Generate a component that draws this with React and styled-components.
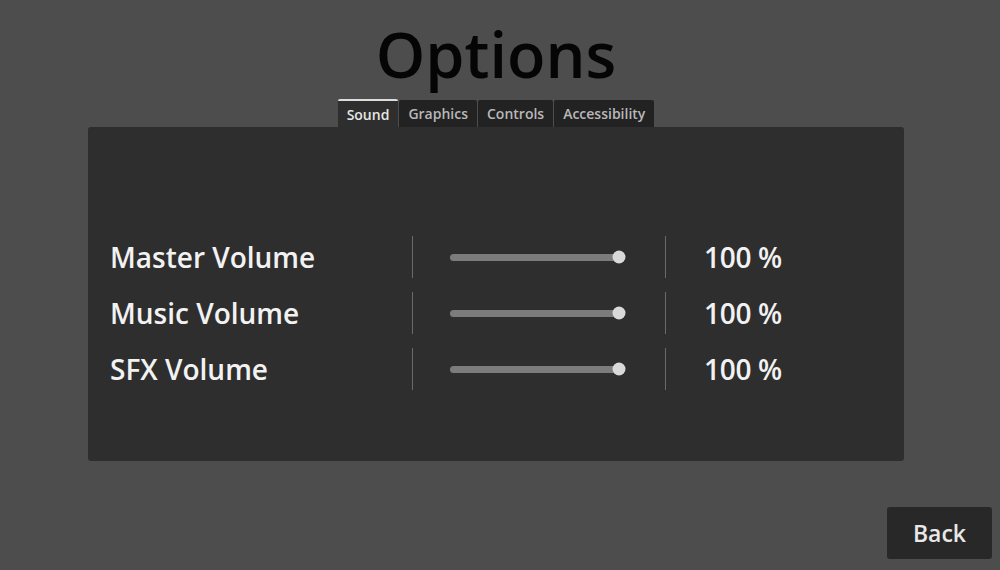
import React from "react";
import styled, { createGlobalStyle } from "styled-components";

const Global = createGlobalStyle`
  html, body { margin: 0; padding: 0; background: #4d4d4d; }
  body { font-family: "Open Sans", "Noto Sans", sans-serif; font-weight: 600; }
  * { box-sizing: border-box; }
`;

const Page = styled.div`
  width: 992px;
  height: 570px;
  display: flex;
  flex-direction: column;
  align-items: center;
`;

const Title = styled.h1`
  margin: 9px 0 0;
  height: 90px;
  font-size: 63px;
  line-height: 90px;
  font-weight: 600;
  color: #050505;
`;

const TabBar = styled.div`
  display: flex;
  align-items: flex-end;
  gap: 1px;
  height: 28px;
`;

const Tab = styled.div`
  height: ${(p) => (p.$active ? "28px" : "27px")};
  padding: 0 9px;
  display: flex;
  align-items: center;
  font-size: 14px;
  color: ${(p) => (p.$active ? "#e6e6e6" : "#b8b8b8")};
  background: ${(p) => (p.$active ? "#2e2e2e" : "#222222")};
  border-top: ${(p) => (p.$active ? "2px solid #dcdcdc" : "none")};
  border-radius: 2px 2px 0 0;
`;

const Panel = styled.div`
  width: 816px;
  height: 334px;
  background: #2e2e2e;
  border-radius: 3px;
  padding: 109px 0 0 22px;
  display: flex;
  flex-direction: column;
  gap: 14px;
`;

const Row = styled.div`
  display: flex;
  align-items: center;
  height: 42px;
`;

const Label = styled.div`
  width: 302px;
  font-size: 28px;
  color: #f2f2f2;
`;

const Divider = styled.div`
  width: 1px;
  align-self: stretch;
  background: #6a6a6a;
`;

const SliderCell = styled.div`
  width: 252px;
  padding-left: 37px;
  display: flex;
  align-items: center;
`;

const Track = styled.div`
  position: relative;
  width: 175px;
  height: 7px;
  border-radius: 4px;
  background: #7c7c7c;
`;

const Knob = styled.div`
  position: absolute;
  top: 50%;
  width: 13px;
  height: 13px;
  border-radius: 50%;
  background: #d9d9d9;
  transform: translate(-50%, -50%);
`;

const Value = styled.div`
  padding-left: 38px;
  font-size: 28px;
  letter-spacing: -0.3px;
  color: #f2f2f2;
`;

const Footer = styled.div`
  align-self: stretch;
  display: flex;
  justify-content: flex-end;
  margin-top: 46px;
`;

const Button = styled.button`
  width: 105px;
  height: 52px;
  border: none;
  border-radius: 3px;
  background: #282828;
  color: #e8e8e8;
  font-family: "Open Sans", "Noto Sans", sans-serif;
  font-weight: 600;
  font-size: 23px;
  padding: 0;
`;

const rows = [
  { label: "Master Volume", value: 100 },
  { label: "Music Volume", value: 100 },
  { label: "SFX Volume", value: 100 },
];

export default function App() {
  return (
    <>
      <Global />
      <Page>
        <Title>Options</Title>
        <TabBar>
          <Tab $active>Sound</Tab>
          <Tab>Graphics</Tab>
          <Tab>Controls</Tab>
          <Tab>Accessibility</Tab>
        </TabBar>
        <Panel>
          {rows.map((r) => (
            <Row key={r.label}>
              <Label>{r.label}</Label>
              <Divider />
              <SliderCell>
                <Track>
                  <Knob style={{ left: `${(r.value / 100) * 169}px` }} />
                </Track>
              </SliderCell>
              <Divider />
              <Value>{r.value} %</Value>
            </Row>
          ))}
        </Panel>
        <Footer>
          <Button>Back</Button>
        </Footer>
      </Page>
    </>
  );
}
